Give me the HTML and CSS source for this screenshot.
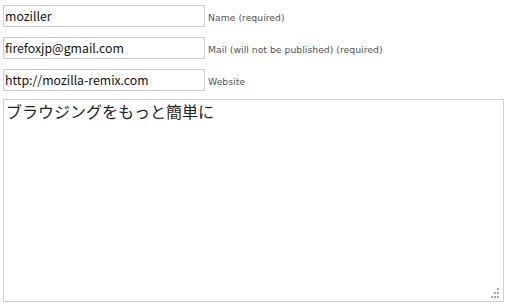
FILE: index.html
```html
<!DOCTYPE html>
<html>
<head>
<meta charset="utf-8">
<link rel="stylesheet" href="styles.css">
</head>
<body>
<form class="comment-form">
  <div class="field">
    <input class="text-input" type="text" value="moziller">
    <label class="field-label">Name (required)</label>
  </div>
  <div class="field">
    <input class="text-input" type="text" value="firefoxjp@gmail.com">
    <label class="field-label">Mail (will not be published) (required)</label>
  </div>
  <div class="field">
    <input class="text-input" type="text" value="http://mozilla-remix.com">
    <label class="field-label">Website</label>
  </div>
  <div class="message-wrap">
    <textarea class="message">ブラウジングをもっと簡単に</textarea>
    <span class="grip">
      <i class="d d1"></i>
      <i class="d d2"></i><i class="d d3"></i>
      <i class="d d4"></i><i class="d d5"></i><i class="d d6"></i>
    </span>
  </div>
</form>
</body>
</html>
```

FILE: styles.css
```css
html, body {
  margin: 0;
  padding: 0;
  background: #ffffff;
}
.comment-form {
  display: flex;
  flex-direction: column;
  padding: 5px 0 0 3px;
  font-family: "DejaVu Sans", "Liberation Sans", sans-serif;
}
.field {
  display: flex;
  align-items: center;
  gap: 3px;
  height: 22px;
  margin-bottom: 10px;
}
.field:nth-child(3) {
  margin-bottom: 8px;
}
.text-input {
  box-sizing: border-box;
  width: 202px;
  height: 22px;
  margin: 0;
  padding: 0 1px;
  border: 1px solid #cfcfcf;
  background: #fff;
  color: #111;
  font-family: "Noto Sans CJK JP", "DejaVu Sans", sans-serif;
  font-size: 12.3px;
  outline: none;
}
.field-label {
  font-size: 9.3px;
  color: #555;
  padding-top: 2px;
}
.message-wrap {
  position: relative;
  width: 501px;
  height: 203px;
}
.message {
  box-sizing: border-box;
  display: block;
  width: 501px;
  height: 203px;
  margin: 0;
  padding: 1px 3px 1px 2px;
  border: 1px solid #cfcfcf;
  resize: none;
  outline: none;
  font-family: "Noto Sans CJK JP", "DejaVu Sans", sans-serif;
  font-size: 16px;
  line-height: 20px;
  color: #222;
  background: #fff;
}
.grip {
  position: absolute;
  right: 5px;
  bottom: 5px;
  width: 9px;
  height: 9px;
}
.d {
  position: absolute;
  width: 2px;
  height: 2px;
  background: #a8a8a8;
}
.d1 { right: 0; top: 0; }
.d2 { right: 3px; top: 4px; }
.d3 { right: 0; top: 4px; }
.d4 { right: 6px; top: 8px; }
.d5 { right: 3px; top: 8px; }
.d6 { right: 0; top: 8px; }
```
